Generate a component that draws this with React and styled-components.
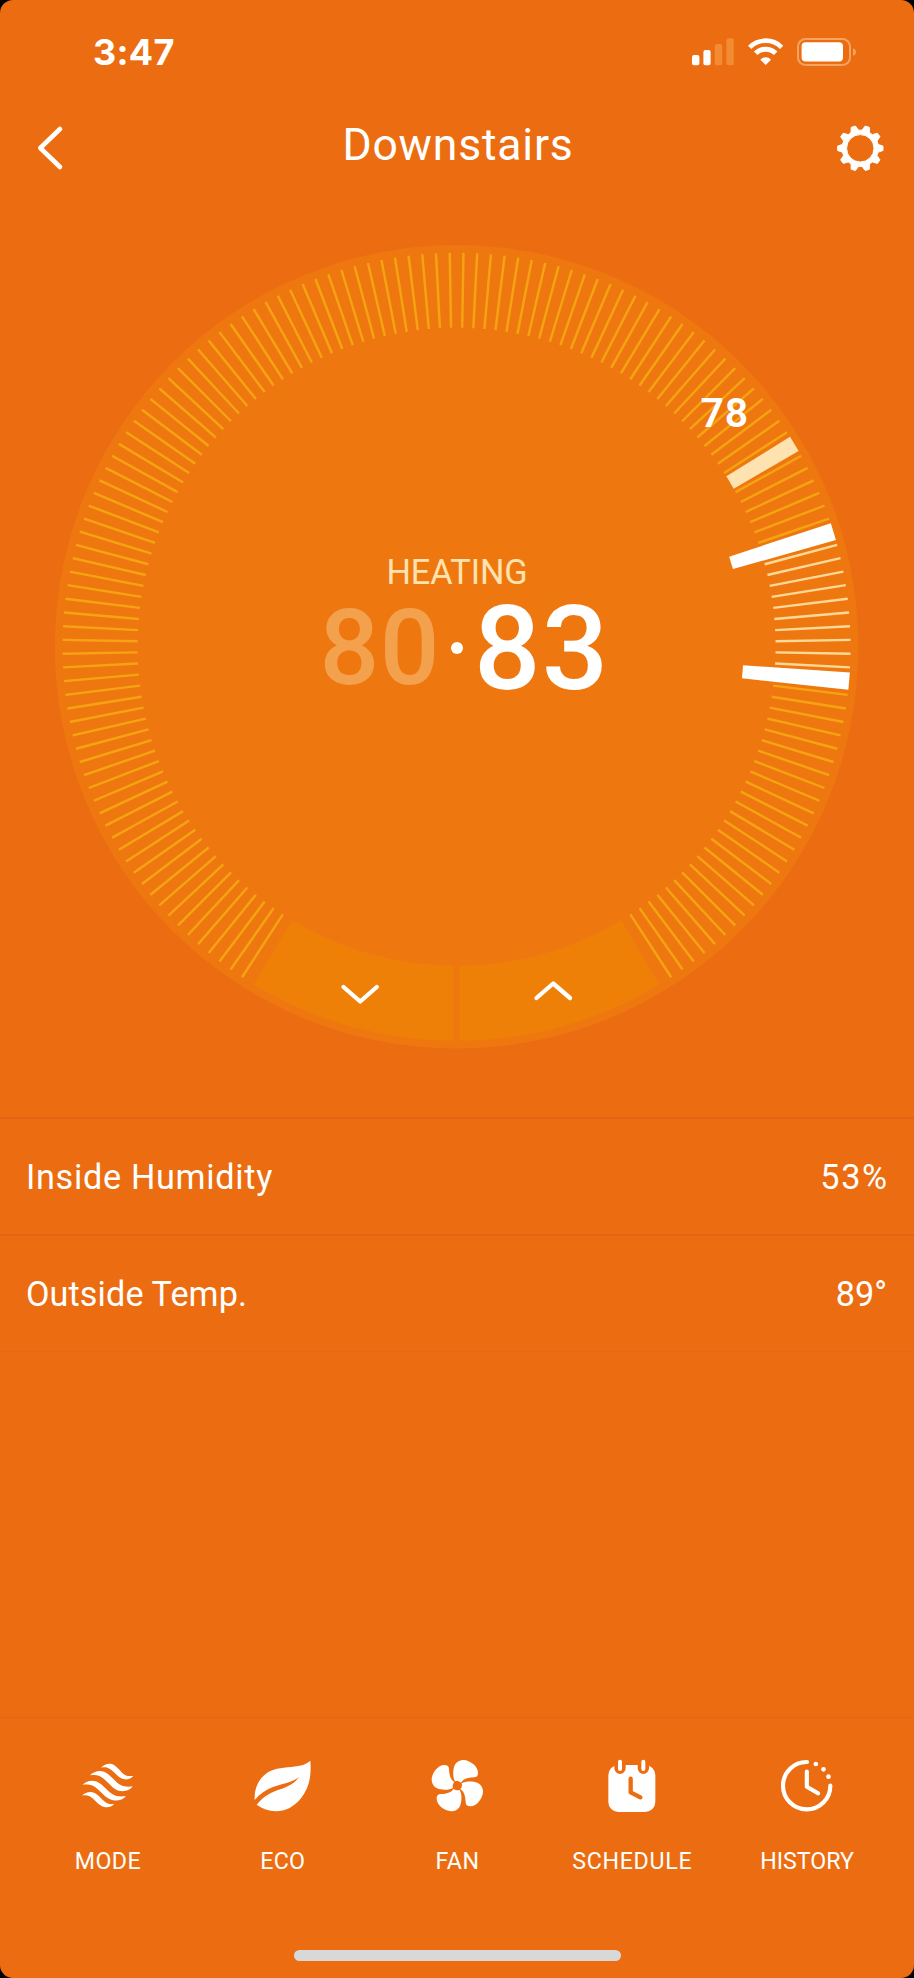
import React from 'react';
import styled, { createGlobalStyle } from 'styled-components';

const GlobalStyle = createGlobalStyle`
body {
margin:0;
background:#000;
}
* {
box-sizing:border-box;
}
svg {
display:block;
overflow:visible;
}
`;

const Container = styled.div`
background-color:#EC6D11;
width:914px;
height:1978px;
border-radius:13px;
overflow:hidden;
display:flex;
flex-direction:column;
color:white;
font-family:Roboto, "Liberation Sans", sans-serif;
`;

const StatusBar = styled.div`
height:104px;
padding:0 57px 0 93px;
display:flex;
justify-content:space-between;
align-items:center;
`;

const Time = styled.div`
font-family:Inter, sans-serif;
font-weight:700;
font-size:36px;
line-height:40px;
letter-spacing:0.3px;
`;

const StatusIcons = styled.div`
display:flex;
align-items:center;
gap:13px;
`;

const Header = styled.div`
height:88px;
padding:0 30px;
display:grid;
grid-template-columns:48px 1fr 48px;
align-items:center;
`;

const Title = styled.h1`
margin:0;
padding:0 0 7px 2px;
font-weight:400;
font-size:44.5px;
line-height:52px;
letter-spacing:0.8px;
text-align:center;
`;

const IconButton = styled.button`
width:48px;
height:48px;
padding:0;
border:0;
background:none;
color:white;
`;

const DialSection = styled.div`
position:relative;
height:925px;
flex-shrink:0;
`;

// sits over the middle of the dial
const Readout = styled.div`
position:absolute;
left:0;
right:0;
top:359px;
display:flex;
flex-direction:column;
align-items:center;
`;

const ModeLabel = styled.div`
color:#FEE3B0;
font-size:34.3px;
line-height:42px;
letter-spacing:-0.1px;
`;

const Temps = styled.div`
width:100%;
height:112px;
display:grid;
grid-template-columns:1fr 12px 1fr;
column-gap:11px;
align-items:center;
`;

const Temp = styled.div`
font-weight:500;
font-size:${props => props.$size}px;
line-height:112px;
color:${props => props.$color};
text-align:${props => props.$align};
letter-spacing:${props => props.$spacing}px;
`;

const Dot = styled.div`
width:12px;
height:12px;
border-radius:50%;
background:white;
margin-bottom:3px;
`;

// label floating beside its marker on the ring
const MarkerLabel = styled.div`
position:absolute;
left:700.5px;
top:197px;
font-weight:600;
font-size:41px;
line-height:48px;
letter-spacing:0.8px;
`;

const InfoRow = styled.div`
height:117px;
flex-shrink:0;
padding:0 27px 0 ${props => props.$left}px;
border-top:2px solid #E56315;
display:flex;
justify-content:space-between;
align-items:center;
font-size:34.2px;
line-height:42px;
letter-spacing:${props => props.$spacing}px;
`;

const InfoValue = styled.span`
letter-spacing:${props => props.$spacing || 0}px;
margin-right:-${props => props.$spacing || 0}px;
`;

const Spacer = styled.div`
flex:1;
border-top:1px solid #E96814;
`;

const TabBar = styled.nav`
height:233px;
padding:40px 19.5px 0 20.5px;
border-top:1px solid #E66414;
display:grid;
grid-template-columns:repeat(5, 1fr);
`;

const Tab = styled.div`
display:flex;
flex-direction:column;
align-items:center;
gap:33px;
`;

const TabLabel = styled.div`
font-size:23.2px;
line-height:28px;
letter-spacing:${props => props.$spacing || 0}px;
`;

const HomeBar = styled.div`
width:327px;
height:11px;
margin:0 auto 17px 294px;
border-radius:6px;
background:#D8D8D8;
flex-shrink:0;
`;

const CX = 456.6;
const CY = 454.8;
const INNER = 319;
const OUTER = 394;

// degrees are clockwise from the top of the dial
const point = (r, deg) => {
    const a = deg * Math.PI / 180;
    return [(CX + r * Math.sin(a)).toFixed(2), (CY - r * Math.cos(a)).toFixed(2)];
};

const markers = [
    { deg: 59, from: INNER, fromWidth: 14.3, toWidth: 16.6, color: '#FEE3B0' },
    { deg: 73, from: 287, fromWidth: 13, toWidth: 17.5, color: 'white' },
    { deg: 95, from: 287, fromWidth: 13, toWidth: 17.5, color: 'white' },
];

const ticks = [];
for (let deg = -147; deg <= 147; deg += 2) {
    if (!markers.some(m => m.deg === deg)) ticks.push(deg);
}

const Tick = ({deg}) => {
    const [x1, y1] = point(INNER, deg);
    const [x2, y2] = point(OUTER, deg);
    const active = deg > 73 && deg < 95;
    return <line x1={x1} y1={y1} x2={x2} y2={y2} stroke={active ? '#FDD998' : '#F6A313'} strokeWidth="2.4" />
}

const Marker = ({deg, from, fromWidth, toWidth, color}) => {
    const top = CY - OUTER;
    const bottom = CY - from;
    return <path
        transform={`rotate(${deg} ${CX} ${CY})`}
        fill={color}
        d={`M${CX - toWidth / 2} ${top}H${CX + toWidth / 2}L${CX + fromWidth / 2} ${bottom}H${CX - fromWidth / 2}Z`}
    />
}

const segment = (side) => {
    const a = point(INNER, 180 + side * 31);
    const b = point(OUTER, 180 + side * 31);
    const x = CX - side * 3;
    const inY = CY + INNER;
    const outY = CY + OUTER;
    const sweep = side > 0 ? 0 : 1;
    return `M${a}L${b}A${OUTER} ${OUTER} 0 0 ${sweep} ${x} ${outY}V${inY}A${INNER} ${INNER} 0 0 ${1 - sweep} ${a}Z`;
};

const Dial = () => (
    <svg width="914" height="925" viewBox="0 0 914 925">
        <circle cx={CX} cy={CY} r="401.7" fill="#EE780F" />
        {ticks.map(deg => <Tick key={deg} deg={deg} />)}
        {markers.map(m => <Marker key={m.deg} {...m} />)}
        <path d={segment(1)} fill="#EF8007" />
        <path d={segment(-1)} fill="#EF8007" />
        <g fill="none" stroke="white" strokeWidth="4.3" strokeLinecap="round" strokeLinejoin="round">
            <path d="M343.5 795L360.2 809.5L376.8 795" />
            <path d="M536.5 806L553.2 791.5L570 806" />
        </g>
    </svg>
)

const Signal = () => (
    <svg width="42" height="28" viewBox="0 0 42 28" fill="white">
        <rect x="0" y="17" width="7.4" height="10.2" rx="2" />
        <rect x="11.4" y="12" width="7.2" height="15.2" rx="2" />
        <g fill="#F38B33">
            <rect x="22.8" y="6" width="7.4" height="21.2" rx="2" />
            <rect x="34.4" y="0.2" width="7.4" height="27" rx="2" />
        </g>
    </svg>
)

const Wifi = () => (
    <svg width="37" height="28" viewBox="870 114 111 84">
        <g fill="none" stroke="white">
            <path strokeWidth="14" d="M878 141.9A68 68 0 0 1 974 141.9" />
            <path strokeWidth="15" d="M896 159.9A42.5 42.5 0 0 1 956 159.9" />
        </g>
        <path fill="white" d="M926 195L910 179A22 22 0 0 1 942 179Z" />
    </svg>
)

const Battery = () => (
    <svg width="60" height="28" viewBox="0 0 60 28">
        <rect x="1" y="1" width="52" height="26" rx="7.5" fill="none" stroke="#F5A35F" strokeWidth="2" />
        <rect x="4.6" y="4.2" width="41.4" height="19.2" rx="4" fill="white" />
        <path d="M56 10.2C60 11.5 60 16.5 56 17.8Z" fill="#F5A35F" />
    </svg>
)

const BackArrow = () => (
    <svg width="48" height="48" viewBox="0 0 48 48" fill="none" stroke="white" strokeWidth="4.6" strokeLinecap="round" strokeLinejoin="round">
        <path d="M30 5L10.3 24L30 43" />
    </svg>
)

const gearPath = Array.from({ length: 10 }, (_, i) => {
    const at = (r, d) => {
        const a = (i * 36 + d) * Math.PI / 180;
        return `${(r * Math.cos(a)).toFixed(2)} ${(r * Math.sin(a)).toFixed(2)}`;
    };
    return `${i ? 'L' : 'M'}${at(18.2, -12.5)}L${at(19.6, -10)}L${at(22.8, -5.5)}L${at(22.8, 5.5)}L${at(19.6, 10)}L${at(18.2, 12.5)}`;
}).join('') + 'Z';

const Gear = () => (
    <svg width="48" height="48" viewBox="-24.3 -24.3 48 48">
        <path fillRule="evenodd" fill="white" stroke="white" strokeWidth="1" strokeLinejoin="round"
            d={`${gearPath}M13.7 0A13.7 13.7 0 1 0 -13.7 0A13.7 13.7 0 1 0 13.7 0Z`} />
    </svg>
)

const ModeIcon = () => (
    <svg width="56" height="56" viewBox="90 114 168 168" fill="white">
        <path d="M153 143C165 132 181 127 195 137C210 148 220 167 235 168C240 168.500 245 168 250 168C242 177 232 180 219 177C201 171 189 148 172 143C166 141 160 142 153 143Z" />
        <path d="M120 166C130 155 147 150 162 155C186 165 199 194 222 199C231 201 240 201 248 199C240 211 226 215 209 213C185 208 171 178 148 168C138 164 129 165 120 166Z" />
        <path d="M98 194C109 183 124 180 138 184C162 193 176 222 199 228C208 230 218 230 228 228C219 240 205 243 189 241C164 236 150 208 130 198C119 193 108 193 98 194Z" />
        <path d="M96 227C106 217 121 213 134 219C151 228 161 249 178 252C183 253 188 252 193 251C186 260 175 263 163 261C144 257 134 237 119 229C111 225 103 226 96 227Z" />
    </svg>
)

const EcoIcon = () => (
    <svg width="56" height="56" viewBox="614 114 168 168" fill="white">
        <path d="M780 122C783 165 779 200 752 235C730 262 704 274 677 274C655 273 636 266 619 254C635 235 652 222 675 213C703 203 730 195 746 171C724 188 695 191 668 201C647 209 628 222 613 240C612 212 620 185 640 167C658 150 680 145 712 142C742 139 766 136 780 122Z" />
    </svg>
)

const FanIcon = () => (
    <svg width="56" height="56" viewBox="87 174 168 168" fill="white">
        {[0, 90, 180, 270].map(deg => (
            <path key={deg} transform={`rotate(${deg} 172 257)`} d="M165 244C158 232 158 210 164 196C170 184 181 180 191 180C210 181 235 199 234 219C234 227 230 232 222 232C205 233 189 236 183 248C178 243 170 242 165 244Z" />
        ))}
    </svg>
)

const ScheduleIcon = () => (
    <svg width="56" height="56" viewBox="372 114 168 168">
        <rect x="385" y="135" width="141" height="141" rx="30" fill="white" />
        <g fill="none" strokeLinecap="round" strokeLinejoin="round">
            <path stroke="#EC6D11" strokeWidth="34" d="M420 125V145M490 125V145" />
            <path stroke="white" strokeWidth="12" d="M420 125V147M490 125V147" />
            <path stroke="#EC6D11" strokeWidth="13" d="M452 176V217L481 232" />
        </g>
    </svg>
)

const HistoryIcon = () => (
    <svg width="56" height="56" viewBox="897 114 168 168">
        <g fill="none" stroke="white" strokeWidth="12.5" strokeLinecap="round" strokeLinejoin="round">
            <path d="M981 126A71 71 0 1 0 1051 197" />
            <path d="M980.5 155V200L1014 220" />
        </g>
        <g fill="white">
            <circle cx="1007.5" cy="132" r="7" />
            <circle cx="1030.5" cy="148" r="7" />
            <circle cx="1045.5" cy="170" r="7" />
        </g>
    </svg>
)

const tabs = [
    { label: 'MODE', Icon: ModeIcon, spacing: 0.4 },
    { label: 'ECO', Icon: EcoIcon, spacing: 0.2 },
    { label: 'FAN', Icon: FanIcon, spacing: 0.5 },
    { label: 'SCHEDULE', Icon: ScheduleIcon, spacing: 0.7 },
    { label: 'HISTORY', Icon: HistoryIcon, spacing: 0 },
];

const Thermostat = ({Room, Mode, Inside, Target, Eco, Humidity, Outside}) => {
    return  <Container>
                <StatusBar>
                    <Time>3:47</Time>
                    <StatusIcons>
                        <Signal />
                        <Wifi />
                        <Battery />
                    </StatusIcons>
                </StatusBar>

                <Header>
                    <IconButton aria-label="Back"><BackArrow /></IconButton>
                    <Title>{Room}</Title>
                    <IconButton aria-label="Settings"><Gear /></IconButton>
                </Header>

                <DialSection>
                    <Dial />
                    <MarkerLabel>{Eco}</MarkerLabel>
                    <Readout>
                        <ModeLabel>{Mode}</ModeLabel>
                        <Temps>
                            <Temp $size={105} $spacing={0.6} $color="#F4A14D" $align="right">{Inside}</Temp>
                            <Dot />
                            <Temp $size={117} $spacing={1.2} $color="white" $align="left">{Target}</Temp>
                        </Temps>
                    </Readout>
                </DialSection>

                <InfoRow $left={26} $spacing={0.7}>
                    Inside Humidity
                    <InfoValue $spacing={1.6}>{Humidity}%</InfoValue>
                </InfoRow>
                <InfoRow $left={26} $spacing={0.1}>
                    Outside Temp.
                    <InfoValue>{Outside}°</InfoValue>
                </InfoRow>
                <Spacer />

                <TabBar>
                    {tabs.map(({label, Icon, spacing}) => (
                        <Tab key={label}>
                            <Icon />
                            <TabLabel $spacing={spacing}>{label}</TabLabel>
                        </Tab>
                    ))}
                </TabBar>
                <HomeBar />
            </Container>
}

const App = () => (
    <>
        <GlobalStyle />
        <Thermostat
            Room="Downstairs"
            Mode="HEATING"
            Inside={80}
            Target={83}
            Eco={78}
            Humidity={53}
            Outside={89}
        />
    </>
)

export default App;
